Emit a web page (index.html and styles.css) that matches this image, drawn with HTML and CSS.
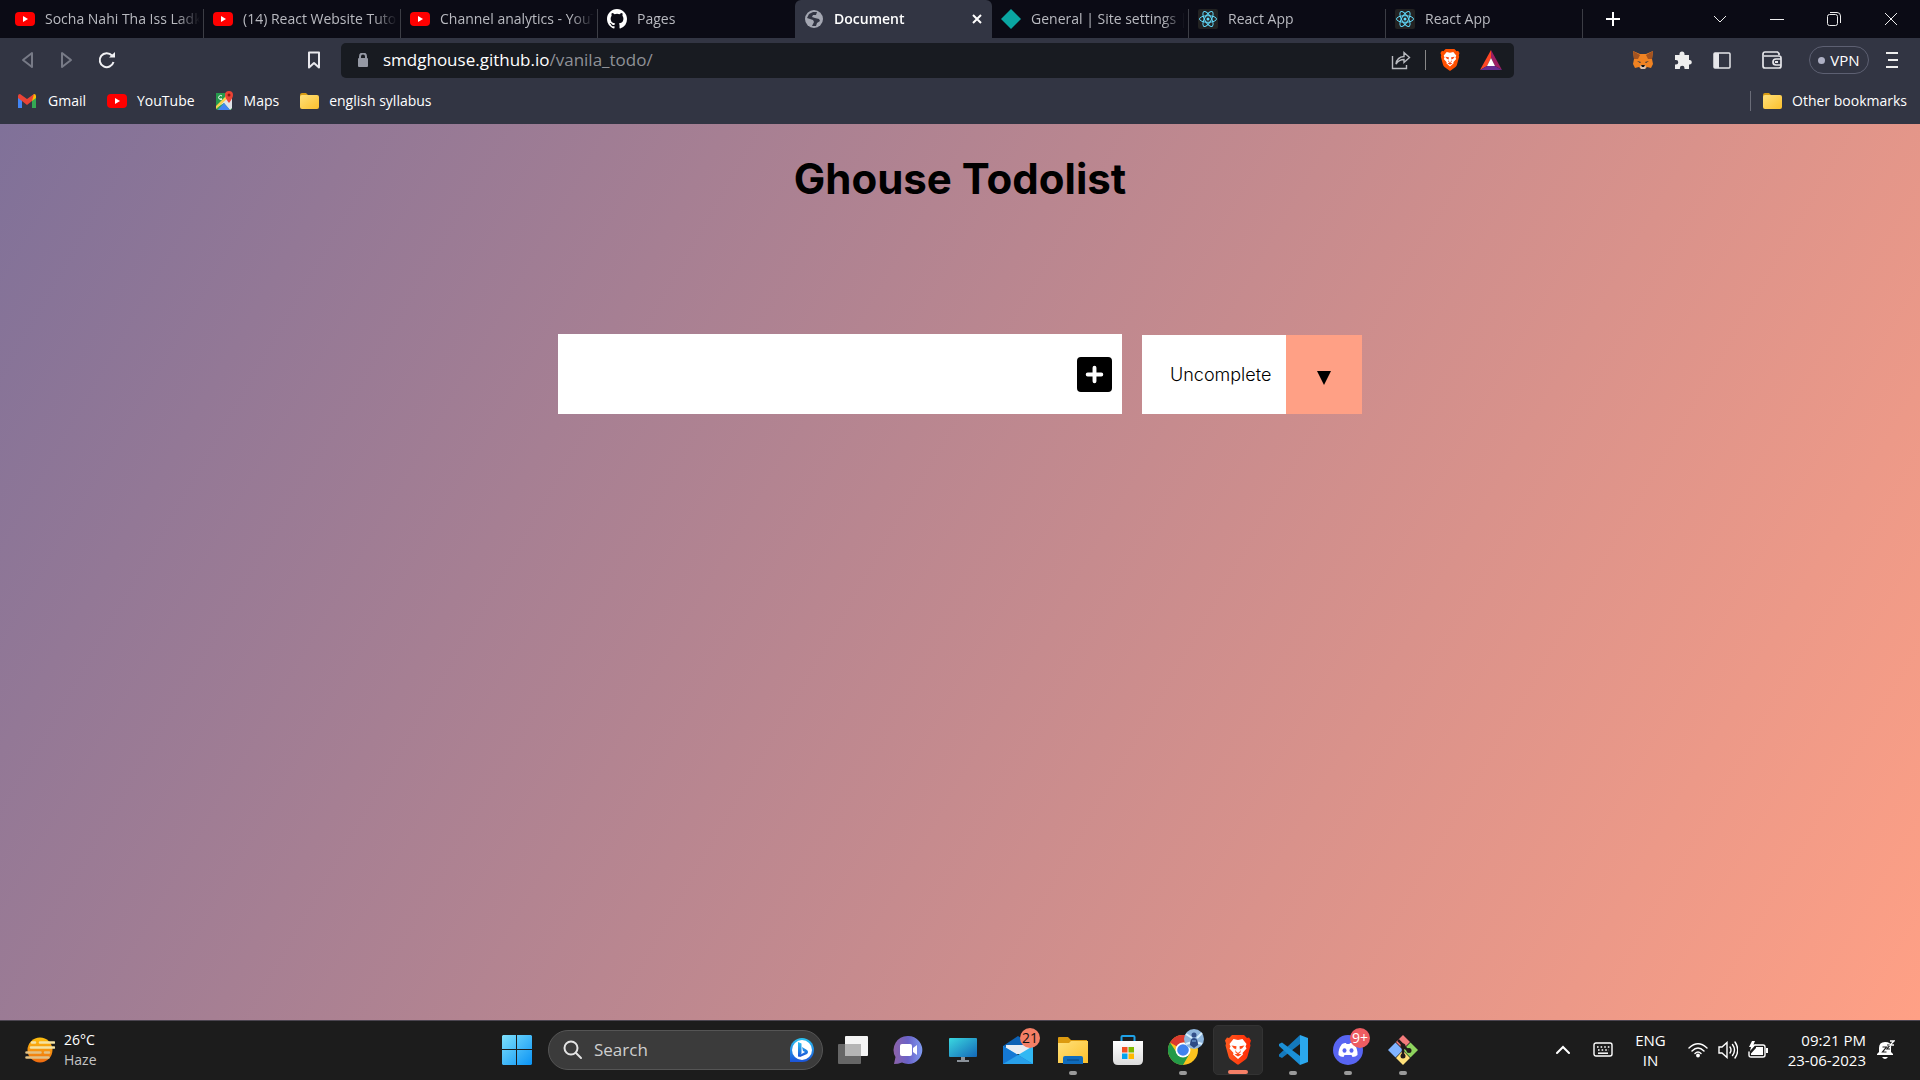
FILE: index.html
```html
<!DOCTYPE html>
<html lang="en">
<head>
<meta charset="utf-8">
<title>Document</title>
<link rel="stylesheet" href="styles.css">
</head>
<body>
<svg class="defs" aria-hidden="true">
  <defs>
    <linearGradient id="g-win" x1="0" y1="0" x2="1" y2="1"><stop offset="0" stop-color="#7ee0fb"/><stop offset="1" stop-color="#0a93f5"/></linearGradient>
    <linearGradient id="g-sun" x1="0" y1="0" x2="0" y2="1"><stop offset="0" stop-color="#fdbf0f"/><stop offset="1" stop-color="#ee6a10"/></linearGradient>
    <linearGradient id="g-chat" x1="0" y1="0" x2="1" y2="0"><stop offset="0" stop-color="#8d62a8"/><stop offset=".5" stop-color="#6a62c8"/><stop offset="1" stop-color="#7f9af0"/></linearGradient>
    <linearGradient id="g-bing" x1="0" y1="0" x2="0" y2="1"><stop offset="0" stop-color="#2bc3f0"/><stop offset="1" stop-color="#1b52d8"/></linearGradient>
    <linearGradient id="g-screen" x1="0" y1="0" x2="1" y2="1"><stop offset="0" stop-color="#3ad8e0"/><stop offset="1" stop-color="#1467b8"/></linearGradient>
    <linearGradient id="g-folder" x1="0" y1="0" x2="1" y2="1"><stop offset="0" stop-color="#ffe07a"/><stop offset="1" stop-color="#fcc02c"/></linearGradient>
    <linearGradient id="g-brave" x1="0" y1="0" x2="1" y2="0"><stop offset="0" stop-color="#ff5a1f"/><stop offset="1" stop-color="#ff2a05"/></linearGradient>
    <linearGradient id="g-bag" x1="0" y1="0" x2="0" y2="1"><stop offset="0" stop-color="#fff"/><stop offset="1" stop-color="#dcdcdc"/></linearGradient>
    <symbol id="i-yt" viewBox="0 0 20 18"><rect y="2" width="20" height="14" rx="4" fill="#f00"/><path d="M8 6v6l5-3z" fill="#fff"/></symbol>
    <symbol id="i-react" viewBox="0 0 20 20"><rect width="20" height="20" rx="2" fill="#222"/><g fill="none" stroke="#61dafb" stroke-width="1"><ellipse cx="10" cy="10" rx="8.500" ry="3.300"/><ellipse cx="10" cy="10" rx="8.500" ry="3.300" transform="rotate(60 10 10)"/><ellipse cx="10" cy="10" rx="8.500" ry="3.300" transform="rotate(120 10 10)"/></g><circle cx="10" cy="10" r="1.500" fill="#61dafb"/></symbol>
    <symbol id="i-folder" viewBox="0 0 19 16"><path d="M0 2Q0 0 2 0h4l2 2h9v4H0z" fill="#d89b12"/><rect y="2" width="19" height="14" rx="2" fill="url(#g-folder)"/></symbol>
    <symbol id="i-lion" viewBox="0 0 26 30"><path d="M7 0h12l3 3 2-.5 2 3-1 3 .5 2-3 11q-.5 2-2 3L14 29.300q-1 .7-2 0L5.500 24.500q-1.500-1-2-3L.5 10.500 1 8.500 0 5.500l2-3 2 .5z"/><path d="M8.500 4l4.500 1 4.500-1 4 5-1 2.500 1 2-4 4.500.5 1.500-5 4.500-5-4.500.5-1.500-4-4.500 1-2-1-2.500z" fill="#fff"/><path d="M6.500 10.500l5 .8-.6 5L13 18l2.100-1.700-.6-5 5-.8-2.500 3-2 .5.700 3.200L13 18.800l-2.700-1.600.7-3.200-2-.5zM9.500 19.500l3.500-1.200 3.500 1.200-3.500 2z" fill="#ff4a17"/></symbol>
  </defs>
</svg>

<header class="browser">
  <nav class="tabs" aria-label="Tabs">
    <div class="tab"><svg class="ic20"><use href="#i-yt"/></svg><span>Socha Nahi Tha Iss Ladki</span></div>
    <div class="tab"><svg class="ic20"><use href="#i-yt"/></svg><span>(14) React Website Tutorial</span></div>
    <div class="tab"><svg class="ic20"><use href="#i-yt"/></svg><span>Channel analytics - YouTube</span></div>
    <div class="tab plain"><svg class="ic20" viewBox="0 0 16 16"><path fill="#fff" d="M8 0C3.580 0 0 3.580 0 8c0 3.540 2.290 6.530 5.470 7.590.4.070.550-.170.550-.380v-1.490c-2.010.370-2.530-.490-2.690-.940-.090-.230-.480-.940-.820-1.130-.280-.150-.680-.520-.010-.530.630-.010 1.080.580 1.230.820.720 1.210 1.870.870 2.330.660.070-.520.280-.870.510-1.070-1.780-.2-3.640-.890-3.640-3.950 0-.870.310-1.590.820-2.150-.080-.2-.360-1.020.080-2.120 0 0 .670-.210 2.200.820a7.600 7.600 0 0 1 4 0c1.530-1.040 2.200-.820 2.200-.820.440 1.100.160 1.920.080 2.120.510.560.820 1.270.820 2.150 0 3.070-1.870 3.750-3.650 3.950.290.250.540.730.540 1.480v2.200c0 .210.150.460.550.380A8 8 0 0 0 16 8c0-4.420-3.580-8-8-8z"/></svg><span>Pages</span></div>
    <div class="tab active"><svg class="ic20" viewBox="0 0 20 20"><circle cx="10" cy="10" r="9" fill="#a4a7b2"/><path d="M9 3L5 5 3 9l3 1 3 1 1 2-2 4 4 0 1-3 3-2-1-2-4-1-3-1 1-2 3 0 1-3z" fill="#323543"/></svg><span>Document</span><button class="close" aria-label="Close tab"><svg width="10" height="12" viewBox="0 0 10 12"><path d="M1 2l8 8M9 2l-8 8" stroke="#fff" stroke-width="2"/></svg></button></div>
    <div class="tab"><svg class="ic20" viewBox="0 0 20 20"><path d="M10 0l10 10-10 10L0 10z" fill="#0aa6a2"/></svg><span>General | Site settings | app</span></div>
    <div class="tab"><svg class="ic20"><use href="#i-react"/></svg><span>React App</span></div>
    <div class="tab"><svg class="ic20"><use href="#i-react"/></svg><span>React App</span></div>
    <button class="newtab" aria-label="New tab"><svg width="16" height="16" viewBox="0 0 16 16"><path d="M8 1v14M1 8h14" stroke="#fff" stroke-width="2"/></svg></button>
    <div class="winbtns">
      <button aria-label="Search tabs"><svg width="14" height="14" viewBox="0 0 14 14"><path d="M1 4l6 6 6-6" class="thin"/></svg></button>
      <button aria-label="Minimize"><svg width="14" height="14" viewBox="0 0 14 14"><path d="M0 7.500h14" class="thin"/></svg></button>
      <button aria-label="Restore"><svg width="14" height="14" viewBox="0 0 14 14"><path d="M3 .5h7a3.500 3.500 0 0 1 3.500 3.500v7M2.500 2.500h6a2 2 0 0 1 2 2v7a2 2 0 0 1-2 2h-6a2 2 0 0 1-2-2v-7a2 2 0 0 1 2-2z" class="thin"/></svg></button>
      <button aria-label="Close"><svg width="14" height="14" viewBox="0 0 14 14"><path d="M1 1l12 12M13 1L1 13" class="thin"/></svg></button>
    </div>
  </nav>

  <div class="toolbar">
    <div class="navbtns">
      <button aria-label="Back"><svg width="16" height="18" viewBox="0 0 16 18"><path d="M13 2v14L4 9z" fill="none" stroke="#777a86" stroke-width="2" stroke-linejoin="round"/></svg></button>
      <button aria-label="Forward"><svg width="16" height="18" viewBox="0 0 16 18"><path d="M3 2v14l9-7z" fill="none" stroke="#777a86" stroke-width="2" stroke-linejoin="round"/></svg></button>
      <button aria-label="Reload"><svg width="18" height="18" viewBox="0 0 18 18"><path d="M14 4.500A7 7 0 1 0 15.500 11" fill="none" stroke="#f1f1f4" stroke-width="2"/><path d="M11 6.500h6V1z" fill="#f1f1f4"/></svg></button>
      <button class="bm" aria-label="Bookmark this page"><svg width="14" height="18" viewBox="0 0 14 18"><path d="M2 1.500h10v15l-5-4.500-5 4.500z" fill="none" stroke="#e9e9ee" stroke-width="2" stroke-linejoin="round"/></svg></button>
    </div>
    <div class="address">
      <svg width="10" height="14" viewBox="0 0 10 14"><rect y="5" width="10" height="9" rx="1" fill="#9599a4"/><path d="M2 6V3.500a3 3 0 0 1 6 0V6" fill="none" stroke="#9599a4" stroke-width="2"/></svg>
      <div class="url"><b>smdghouse.github.io</b>/vanila_todo/</div>
      <button aria-label="Share"><svg width="20" height="20" viewBox="0 0 20 20"><path d="M1.500 6v12.500h14V15M5 14q1-7 8-7.500V2.500l5.500 5-5.500 5V9.500q-5 0-8 4.500z" fill="none" stroke="#b9bbc0" stroke-width="1.400"/></svg></button>
      <i class="bar"></i>
      <button aria-label="Brave Shields"><svg width="20" height="22" fill="#ff5000"><use href="#i-lion"/></svg></button>
      <button aria-label="Brave Rewards"><svg width="22" height="20" viewBox="0 0 22 20"><path d="M11 0L0 20l7-4 4-8z" fill="#ff4724"/><path d="M11 0l11 20-7-4-4-8z" fill="#9e1f63"/><path d="M0 20h22l-7-4H7z" fill="#662d91"/><path d="M11 8l4 8H7z" fill="#fff"/></svg></button>
    </div>
    <div class="ext">
      <button aria-label="MetaMask"><svg width="20" height="18" viewBox="0 0 20 18"><path d="M0 0l7 3h6l7-3-1 8 1 5-2 4-4-1-2 2H8l-2-2-4 1-2-4 1-5z" fill="#f08322"/><path d="M0 0l7 4-2 4-4 0zM20 0l-7 4 2 4 4 0z" fill="#a45320"/><path d="M4 10l4 1-1 1zM16 10l-4 1 1 1z" fill="#233447"/><path d="M8 14h4l1 2-1 2H8l-1-2z" fill="#d9c5b5"/><path d="M8 14h4l-1 2H9z" fill="#111"/></svg></button>
      <button aria-label="Extensions"><svg width="18" height="19" viewBox="0 0 18 19"><path d="M1 4h4.500V3a2.500 2.500 0 0 1 5 0v1H15v5h1a2.300 2.300 0 0 1 0 4.500h-1V18h-4.500v-1a2.300 2.300 0 0 0-4.600 0v1H1v-4.500h1a2.200 2.200 0 0 0 0-4.500H1z" fill="#eee"/></svg></button>
      <button aria-label="Sidebar"><svg width="18" height="17" viewBox="0 0 18 17"><rect x="1" y="1" width="16" height="15" rx="1" fill="none" stroke="#e6e6ea" stroke-width="1.500"/><path d="M1 1h5v15H1z" fill="#e6e6ea"/></svg></button>
      <button class="wallet" aria-label="Wallet"><svg width="20" height="18" viewBox="0 0 20 18"><path d="M17 4V2.500L15.500 1H3a2 2 0 0 0-2 2v12a2 2 0 0 0 2 2h14a2 2 0 0 0 2-2V7a2 2 0 0 0-2-2H2" fill="none" stroke="#e6e6ea" stroke-width="1.700"/><path d="M19 8h-5a3 3 0 0 0 0 6h5" fill="none" stroke="#e6e6ea" stroke-width="1.700"/><path d="M13 11h3" stroke="#e6e6ea" stroke-width="2"/></svg></button>
      <button class="vpn"><i></i>VPN</button>
      <button aria-label="Menu"><svg width="12" height="18" viewBox="0 0 12 18"><path d="M0 2h12M2 9h10M0 16h12" stroke="#eee" stroke-width="2"/></svg></button>
    </div>
  </div>

  <div class="bookmarks">
    <a href="#"><svg width="20" height="14" viewBox="0 0 20 14"><path d="M0 2v12h4V5z" fill="#4285f4"/><path d="M18 2v12h-4V5z" fill="#34a853"/><path d="M14 2l2-2q2 0 2 2v2l-4 3z" fill="#fbbc04"/><path d="M0 2q0-2 2-2l7 5 7-5-2 7-5 4-5-4-4-3z" fill="#ea4335"/></svg>Gmail</a>
    <a href="#"><svg width="20" height="18"><use href="#i-yt"/></svg>YouTube</a>
    <a href="#"><svg width="18" height="20" viewBox="0 0 18 20"><rect y="2" width="16" height="17" rx="2" fill="#34a853"/><path d="M0 17L14 4l2 2v11l-2 2-6-7z" fill="#dfe3e8"/><path d="M2 19l6-7 6 7z" fill="#4285f4"/><path d="M0 12v6l14-13-3-3z" fill="#fbd04b"/><path d="M0 2h9v4l-9 9z" fill="#26994c"/><path d="M13 12Q9 7 9 4a4 4 0 0 1 8 0q0 3-4 8z" fill="#ea4335"/><circle cx="13" cy="4" r="1.500" fill="#8c1a12"/><path d="M6 5a2 2 0 1 0 0 3H4" fill="none" stroke="#fff"/></svg>Maps</a>
    <a href="#"><svg width="19" height="16"><use href="#i-folder"/></svg>english syllabus</a>
    <a href="#" class="other"><svg width="19" height="16"><use href="#i-folder"/></svg>Other bookmarks</a>
  </div>
</header>

<main class="page">
  <h1>Ghouse Todolist</h1>
  <form class="todo">
    <div class="entry">
      <input type="text" aria-label="New todo">
      <button type="button" class="add" aria-label="Add todo"><svg width="35" height="35" viewBox="0 0 36 36"><rect width="36" height="36" rx="4"/><path d="M18 11v14M11 18h14" stroke="#fff" stroke-width="4" stroke-linecap="round"/></svg></button>
    </div>
    <div class="filter">
      <select aria-label="Filter todos"><option>All</option><option>Completed</option><option selected>Uncomplete</option></select>
      <span class="arrow" aria-hidden="true"><svg width="14" height="14" viewBox="0 0 14 14"><path d="M0 0h14L7 14z"/></svg></span>
    </div>
  </form>
</main>

<footer class="taskbar">
  <div class="weather">
    <svg width="30" height="26" viewBox="0 0 30 26"><circle cx="15" cy="13" r="12.500" fill="url(#g-sun)"/><g stroke-width="2.600" stroke-linecap="round" stroke="#f6e3a2"><path d="M7 5.500h3M15 5.500h14M6 10.500h23"/><path d="M1.500 15.500h14M20 15.500h4M1.500 20.500h22" stroke="#e2c184"/></g></svg>
    <div><p>26°C</p><p class="dim">Haze</p></div>
  </div>
  <div class="apps">
    <button class="app" aria-label="Start"><svg width="30" height="30" viewBox="0 0 30 30"><path d="M1 0h13v14H0V1zM15 0h14l1 1v13H15zM0 15h14v15H1l-1-1zM15 15h15v14l-1 1H15z" fill="url(#g-win)"/></svg></button>
    <label class="search"><svg width="20" height="20" viewBox="0 0 20 20"><circle cx="8" cy="8" r="6.500" fill="none" stroke="#e4e4e4" stroke-width="2"/><path d="M13 13l5 5" stroke="#e4e4e4" stroke-width="2" stroke-linecap="round"/></svg><input type="text" placeholder="Search" aria-label="Search"><svg width="26" height="26" viewBox="0 0 26 26"><path d="M13 1a12 12 0 1 1 0 24H1V13A12 12 0 0 1 13 1z" fill="url(#g-bing)"/><circle cx="13" cy="13" r="10" fill="#fff"/><path d="M9 5l3.500 1.500v10L9 20zM13 10l5 3q2 2 0 4l-7 3-2-1 7-4-2-1z" fill="url(#g-bing)"/></svg></label>
    <button class="app" aria-label="Task view"><svg width="30" height="28" viewBox="0 0 30 28"><rect y="8" width="23" height="20" rx="1" fill="#666"/><rect x="7" width="23" height="20" rx="1" fill="#f4f4f4"/><path d="M7 8h16v12H7z" fill="#b5b5b5"/></svg></button>
    <button class="app" aria-label="Chat"><svg width="30" height="30" viewBox="0 0 30 30"><path d="M15 1a14 14 0 1 1-6 26.500Q5 29 1 29l1.500-7A14 14 0 0 1 15 1z" fill="url(#g-chat)"/><rect x="7" y="9" width="12" height="12" rx="2" fill="#fff"/><path d="M20 13l4-3v10l-4-3z" fill="#fff"/></svg></button>
    <button class="app" aria-label="This PC"><svg width="28" height="26" viewBox="0 0 28 26"><rect y="1" width="28" height="19" rx="1" fill="url(#g-screen)"/><path d="M12 20h4v3h4v2H8v-2h4z" fill="#8b929a"/></svg></button>
    <button class="app" aria-label="Mail"><svg width="30" height="28" viewBox="0 0 30 28"><path d="M0 10L15 0l15 10v6H0z" fill="#0d62b5"/><path d="M3 9h24v9H3z" fill="#e9edf2"/><path d="M0 10l15 9 15-9v18H0z" fill="#31b8f3"/><path d="M0 10l30 18H0z" fill="#1478d4"/><path d="M0 28l15-9 15 9z" fill="#28a0ea"/></svg><em>21</em></button>
    <button class="app run" aria-label="File Explorer"><svg width="30" height="28" viewBox="0 0 30 28"><path d="M0 2q0-1 1-1h9l3 3h16v8H0z" fill="#dc9a10"/><path d="M0 7h11l2-2h17v22H0z" fill="url(#g-folder)"/><path d="M5 28v-6q0-2 2-2h16q2 0 2 2v6z" fill="#0f6cbd"/><path d="M9 24h12" stroke="#08427c"/></svg></button>
    <button class="app" aria-label="Microsoft Store"><svg width="30" height="30" viewBox="0 0 30 30"><path d="M8.500 8V2q0-1 1-1h11q1 0 1 1v6" fill="none" stroke="#1fa2e8" stroke-width="2"/><path d="M0 6h30v19q0 5-5 5H5q-5 0-5-5z" fill="url(#g-bag)"/><path d="M9 12h6v6H9z" fill="#f25022"/><path d="M15 12h6v6h-6z" fill="#7fba00"/><path d="M9 18h6v6H9z" fill="#00a4ef"/><path d="M15 18h6v6h-6z" fill="#ffb900"/><path d="M15 12v12M9 18h12" stroke="#eee"/></svg></button>
    <button class="app run" aria-label="Google Chrome"><svg width="30" height="30" viewBox="0 0 30 30"><circle cx="15" cy="15" r="15" fill="#fcc31e"/><path d="M15 15L2 7.500A15 15 0 0 1 28 7.500H15z" fill="#dc3a2e"/><path d="M2 7.500A15 15 0 0 0 15 30l6.500-11.300L9 18z" fill="#249a48"/><circle cx="15" cy="15" r="7.500" fill="#fff"/><circle cx="15" cy="15" r="5.800" fill="#4082ee"/></svg><svg class="avatar" width="20" height="20" viewBox="0 0 20 20"><circle cx="10" cy="10" r="10" fill="#8fb6dd"/><path d="M2 5l6 4M18 4l-5 5M2 15l6-2M18 15l-6-2" stroke="#d9f0ff" stroke-width="2"/><circle cx="10" cy="6" r="2.500" fill="#34508a"/><path d="M6 16q0-7 4-7t4 7l-4 3z" fill="#2c4a85"/><path d="M8 12h4" stroke="#7fb0e6"/></svg></button>
    <button class="app run current" aria-label="Brave"><svg width="26" height="30" fill="url(#g-brave)"><use href="#i-lion"/></svg></button>
    <button class="app run" aria-label="Visual Studio Code"><svg width="30" height="30" viewBox="0 0 30 30"><path d="M22 0l8 3v24l-8 3z" fill="#2ba8ee"/><path d="M22 0v9L4 23l-3-1.500v-2z" fill="#1479bd"/><path d="M22 30v-9L4 7.500 1 9v2z" fill="#1b8fd6"/></svg></button>
    <button class="app run" aria-label="Discord"><svg width="30" height="30" viewBox="0 0 30 30"><circle cx="15" cy="15" r="15" fill="#5865f2"/><path d="M9 9q3-1.500 4-1l.5 1h3l.5-1q1-.5 4 1 4 5 3.500 11-2 2-5 2l-1-2h-7l-1 2q-3 0-5-2Q5 14 9 9z" fill="#fff"/><ellipse cx="11.500" cy="15.500" rx="2" ry="2.300" fill="#5865f2"/><ellipse cx="18.500" cy="15.500" rx="2" ry="2.300" fill="#5865f2"/></svg><em class="red">9+</em></button>
    <button class="app run" aria-label="Git Bash"><svg width="30" height="30" viewBox="0 0 30 30"><path d="M15 0l7 7-7 7-7-7z" fill="#f37b7b"/><path d="M7.500 7.500L15 15l-7.500 7.500L0 15z" fill="#80b3ff"/><path d="M22.500 7.500L30 15l-7.500 7.500L15 15z" fill="#8ed45e"/><path d="M15 15.500l7 7.500-7 7-7-7z" fill="#ffe07a"/><path d="M10 5l5 5v11M15 11l6 5" fill="none" stroke="#231a1a" stroke-width="2.500"/><circle cx="15" cy="11" r="2.500" fill="#231a1a"/><circle cx="21" cy="15.500" r="2.500" fill="#231a1a"/><circle cx="15" cy="21" r="2.500" fill="#231a1a"/></svg></button>
  </div>
  <div class="tray">
    <svg width="14" height="10" viewBox="0 0 14 10"><path d="M1 8l6-6 6 6" class="line"/></svg>
    <svg class="kbd" width="20" height="16" viewBox="0 0 20 16"><rect x="1" y="1" width="18" height="13" rx="2" class="line thinner"/><path d="M4 5h13M5 8h11" stroke="#fff" stroke-width="1.600" stroke-dasharray="1.600 2"/><path d="M5 11.200h10" stroke="#fff" stroke-width="1.500"/></svg>
    <div class="lang"><p>ENG</p><p>IN</p></div>
    <div class="status">
      <svg width="20" height="16" viewBox="0 0 20 16"><path d="M1 6q9-8.500 18 0M4 9q6-6 12 0M7 11.500q3-3 6 0" class="line thinner"/><circle cx="10" cy="13.500" r="1.900" fill="#fff"/></svg>
      <svg width="20" height="18" viewBox="0 0 20 18"><path d="M1 6h3l5-4.500v15L4 12H1zM12 6q2 3 0 6M14.500 3.500q4 5.500 0 11M17 1q5.500 8 0 16" class="line thinner"/></svg>
      <svg width="20" height="18" viewBox="0 0 20 18"><path d="M7 4h8q2 0 2 2v8q0 2-2 2H3q-2 0-2-2v-3" class="line thinner"/><path d="M8 6h7v8H3v-1.500L8 7zM18 7h2v5h-2zM4 0h3L5.500 3.500H8L2 10l1-4H1z" fill="#fff"/></svg>
    </div>
    <div class="clock"><p>09:21 PM</p><p>23-06-2023</p></div>
    <svg width="18" height="20" viewBox="0 0 18 20"><path d="M0 15v-1l2-2V8q0-6 6-6 7 0 6 6v4l2 2v1zM5 17h6q-3 4-6 0z" fill="#fff"/><path d="M5.500 7h4l-4 5h4M10 5h3l-3 4h3" fill="none" stroke="#1c1c1c" stroke-width="1.200"/><path d="M13 1h4l-4 4h4" fill="none" stroke="#fff" stroke-width="1.300"/></svg>
  </div>
</footer>
</body>
</html>
```

FILE: styles.css
```css
* { box-sizing: border-box; margin: 0; padding: 0; }
body {
  min-height: 100vh;
  display: flex;
  flex-direction: column;
  font: 15px/20px "Open Sans", "Noto Sans", sans-serif;
  color: #fff;
}
button { background: none; border: 0; color: inherit; font: inherit; display: flex; align-items: center; justify-content: center; }
svg { display: block; flex: none; }
.defs { position: absolute; width: 0; height: 0; }
.ic20 { width: 20px; height: 20px; }
.thin { fill: none; stroke: #eee; stroke-width: 1; }
.line { fill: none; stroke: #fff; stroke-width: 2; stroke-linecap: round; }
.thinner { stroke-width: 1.400; }

/* Browser frame */
.browser { background: #323543; font-size: 14px; }
.tabs { display: flex; height: 38px; background: #0b0b15; }
.tab {
  flex: 0 1 197px;
  min-width: 0;
  display: flex;
  align-items: center;
  gap: 10px;
  padding: 0 4px 0 9px;
  color: #b9bac0;
  background: linear-gradient(#3c3d45, #3c3d45) right bottom / 1px 29px no-repeat;
}
.tab:first-child { flex-basis: 204px; padding-left: 15px; }
.tab span {
  flex: 1;
  white-space: nowrap;
  overflow: hidden;
  -webkit-mask-image: linear-gradient(90deg, #000 85%, transparent);
  mask-image: linear-gradient(90deg, #000 85%, transparent);
}
.tab.plain { background: none; }
.tab.active { background: #323543; border-radius: 6px 6px 0 0; color: #fff; font-weight: 600; }
.close { width: 22px; height: 22px; }
.newtab { width: 60px; }
.winbtns { display: flex; margin-left: auto; padding-right: 1px; }
.winbtns button { width: 57px; }

.toolbar { display: flex; align-items: center; height: 44px; }
.navbtns { display: flex; align-items: center; width: 341px; padding: 0 15px; }
.navbtns button { width: 24px; margin-right: 16px; }
.navbtns .bm { margin: 0 0 0 auto; }
.address {
  flex: 0 1 1173px;
  height: 35px;
  display: flex;
  align-items: center;
  background: #181b21;
  border-radius: 5px;
  padding: 0 12px 0 17px;
  font-size: 17px;
  color: #8f9197;
}
.url { flex: 1; margin-left: 15px; }
.url b { font-weight: 400; color: #fff; }
.bar { width: 1px; height: 20px; background: #888; margin: 0 14px; }
.address button + button { margin-left: 20px; }
.ext { display: flex; align-items: center; margin-left: auto; padding-right: 22px; gap: 21px; }
.wallet { margin: 0 6px 0 10px; }
.vpn { width: 60px; height: 28px; border: 1px solid #5d6072; border-radius: 14px; gap: 5px; font-size: 15px; }
.vpn i { width: 7px; height: 7px; border-radius: 50%; background: #aeb0c4; }
.ext button:last-child { margin-left: -4px; }

.bookmarks { display: flex; align-items: center; height: 42px; padding: 0 13px 4px 18px; gap: 21px; }
.bookmarks a { display: flex; align-items: center; gap: 10px; color: #fff; text-decoration: none; }
.other { margin-left: auto; border-left: 1px solid #6a6c78; padding-left: 12px; }

/* Todo page */
.page {
  flex: 1;
  background: linear-gradient(120deg, #807199, #ffa085);
  color: #000;
  font-family: Inter, "Open Sans", sans-serif;
}
h1 { text-align: center; font-size: 42px; line-height: 60px; font-weight: 700; padding-top: 25px; }
.todo { display: flex; justify-content: center; align-items: flex-end; gap: 20px; margin-top: 125px; }
.entry { display: flex; align-items: center; width: 564px; height: 80px; background: #fff; padding-right: 10px; }
.entry input { flex: 1; min-width: 0; height: 100%; border: 0; outline: 0; padding: 10px; font: inherit; font-size: 24px; }
.filter { display: flex; width: 220px; height: 79px; background: #fff; }
.filter select {
  flex: 1;
  min-width: 0;
  appearance: none;
  border: 0;
  background: none;
  padding-left: 28px;
  font: 300 18px/24px Inter, sans-serif;
  color: #000;
}
.arrow { width: 76px; background: #ffa085; display: flex; align-items: center; justify-content: center; padding-top: 6px; }

/* Taskbar */
.taskbar {
  display: grid;
  grid-template-columns: 1fr auto 1fr;
  align-items: center;
  height: 60px;
  padding-bottom: 1px;
  background: #1c1c1c;
  border-top: 1px solid #4b4550;
}
.weather { display: flex; align-items: center; gap: 9px; padding-left: 25px; font-size: 14px; }
.dim { color: #c4c4c4; }
.apps { display: flex; align-items: center; gap: 5px; }
.app { position: relative; width: 50px; height: 50px; border-radius: 5px; }
.search {
  display: flex;
  align-items: center;
  width: 275px;
  height: 40px;
  margin-left: 1px;
  padding: 0 7px 0 14px;
  border: 1px solid #555;
  border-radius: 20px;
  background: #3b3b3b;
}
.search input { flex: 1; min-width: 0; margin-left: 11px; border: 0; outline: 0; background: none; font: 17px/24px "Open Sans", sans-serif; color: #fff; }
.search input::placeholder { color: #cfcfcf; opacity: 1; }
.run::after { content: ""; position: absolute; bottom: 0; left: 21px; width: 8px; height: 4px; border-radius: 2px; background: #9a9a9a; }
.current { background: #2b2b2b; border: 1px solid #333; }
.current::after { left: 14px; width: 20px; background: #f47f66; }
.app em {
  position: absolute;
  top: 3px;
  right: 3px;
  min-width: 20px;
  height: 20px;
  border-radius: 10px;
  background: #f47f66;
  color: #111;
  font: 14px/20px "Open Sans", sans-serif;
}
.app .red { background: #ee5c62; color: #fff; }
.avatar { position: absolute; top: 4px; right: 4px; }
.tray { display: flex; align-items: center; justify-content: flex-end; padding-right: 25px; }
.kbd { margin: 0 22px 0 23px; }
.lang { text-align: center; }
.status { display: flex; align-items: center; gap: 10px; margin: 0 20px 0 22px; }
.clock { text-align: right; margin-right: 11px; }
```
